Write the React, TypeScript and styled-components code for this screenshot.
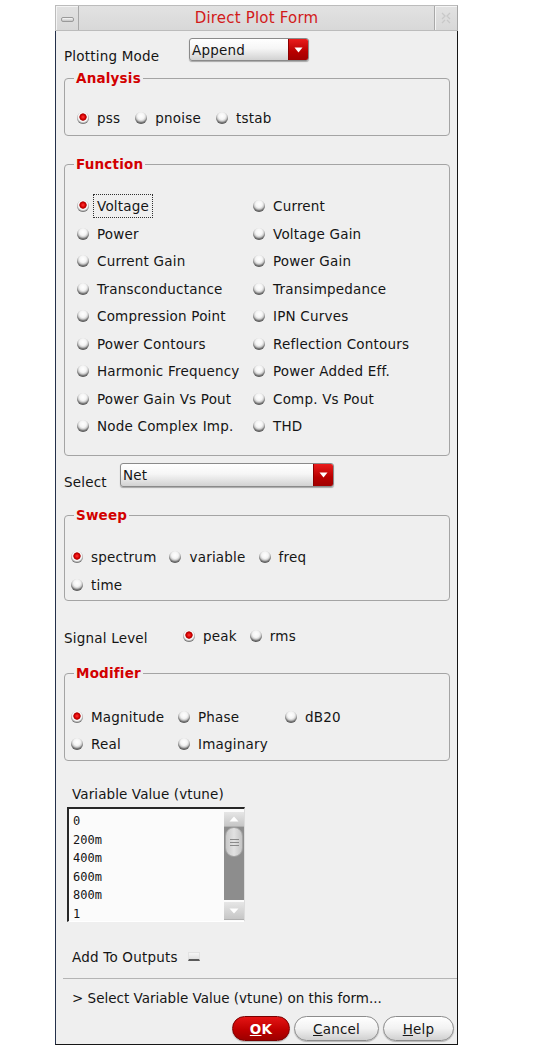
import React from "react";
import styled, { createGlobalStyle } from "styled-components";

const GlobalStyle = createGlobalStyle`
  html, body {
    margin: 0;
    padding: 0;
    background: #ffffff;
  }
  body {
    font-family: "DejaVu Sans", "Liberation Sans", sans-serif;
    font-size: 13.5px;
    letter-spacing: 0.2px;
    color: #151515;
  }
`;

const functionItems: [string, string][] = [
    ["Voltage", "Current"],
    ["Power", "Voltage Gain"],
    ["Current Gain", "Power Gain"],
    ["Transconductance", "Transimpedance"],
    ["Compression Point", "IPN Curves"],
    ["Power Contours", "Reflection Contours"],
    ["Harmonic Frequency", "Power Added Eff."],
    ["Power Gain Vs Pout", "Comp. Vs Pout"],
    ["Node Complex Imp.", "THD"],
];

const variableValues = ["0", "200m", "400m", "600m", "800m", "1"];

const Radio = ({ label, checked, focused }: { label: string; checked?: boolean; focused?: boolean }) => (
    <Item>
        <RadioDot $checked={ checked }/>
        <ItemLabel $focused={ focused }>{ label }</ItemLabel>
    </Item>
);

const Dropdown = ({ value, width, height }: { value: string; width: number; height: number }) => (
    <DropBox $width={ width } $height={ height }>
        <DropText>{ value }</DropText>
        <DropArrow>
            <svg width="9" height="6" viewBox="0 0 9 6">
                <polygon points="0.5,0.5 8.5,0.5 4.5,5.5" fill="#ffffff"/>
            </svg>
        </DropArrow>
    </DropBox>
);

const App = () => {
    return (
        <Page>
            <GlobalStyle/>
            <Window>
                <TitleBar>
                    <TitleButton $side="left">
                        <MinimizeGlyph/>
                    </TitleButton>
                    <TitleText>Direct Plot Form</TitleText>
                    <TitleButton $side="right">
                        <svg width="12" height="14" viewBox="0 0 12 14">
                            <path d="M2 2 L5 5 L2 8 M10 2 L7 5 L10 8 M2 12 L5 9 M10 12 L7 9"
                                  stroke="#c8c8c8" strokeWidth="1.3" fill="none"/>
                        </svg>
                    </TitleButton>
                </TitleBar>

                <Body>
                    <FormRow>
                        <FieldLabel $width={ 125 }>Plotting Mode</FieldLabel>
                        <Dropdown value="Append" width={ 120 } height={ 23 }/>
                    </FormRow>

                    <Group $mt={ 9 }>
                        <Legend>Analysis</Legend>
                        <GroupBody $pt={ 20 } $pb={ 5 } $pl={ 12 }>
                            <RadioRow $gap={ 11 }>
                                <Radio label="pss" checked/>
                                <Radio label="pnoise"/>
                                <Radio label="tstab"/>
                            </RadioRow>
                        </GroupBody>
                    </Group>

                    <Group $mt={ 20 }>
                        <Legend>Function</Legend>
                        <GroupBody $pt={ 22 } $pb={ 17 } $pl={ 12 }>
                            <FunctionGrid>
                                { functionItems.map(([a, b]) => (
                                    <React.Fragment key={ a }>
                                        <Radio label={ a } checked={ a === "Voltage" } focused={ a === "Voltage" }/>
                                        <Radio label={ b }/>
                                    </React.Fragment>
                                )) }
                            </FunctionGrid>
                        </GroupBody>
                    </Group>

                    <FormRow $mt={ 7 }>
                        <FieldLabel $width={ 56 }>Select</FieldLabel>
                        <Dropdown value="Net" width={ 214 } height={ 24 }/>
                    </FormRow>

                    <Group $mt={ 20 }>
                        <Legend>Sweep</Legend>
                        <GroupBody $pt={ 22 } $pb={ 3 } $pl={ 6 }>
                            <RadioRow $gap={ 9 }>
                                <Radio label="spectrum" checked/>
                                <Radio label="variable"/>
                                <Radio label="freq"/>
                            </RadioRow>
                            <RadioRow $gap={ 9 } $mt={ 4 }>
                                <Radio label="time"/>
                            </RadioRow>
                        </GroupBody>
                    </Group>

                    <SignalRow>
                        <SignalLabel>Signal Level</SignalLabel>
                        <RadioRow $gap={ 9 }>
                            <Radio label="peak" checked/>
                            <Radio label="rms"/>
                        </RadioRow>
                    </SignalRow>

                    <Group $mt={ 17 }>
                        <Legend>Modifier</Legend>
                        <GroupBody $pt={ 24 } $pb={ 4 } $pl={ 6 }>
                            <ModifierGrid>
                                <Radio label="Magnitude" checked/>
                                <Radio label="Phase"/>
                                <Radio label="dB20"/>
                                <Radio label="Real"/>
                                <Radio label="Imaginary"/>
                            </ModifierGrid>
                        </GroupBody>
                    </Group>

                    <PlainLabel $mt={ 25 }>Variable Value (vtune)</PlainLabel>
                    <ListBox>
                        <ListItems>
                            { variableValues.map(v => <ListItem key={ v }>{ v }</ListItem>) }
                        </ListItems>
                        <ScrollBar>
                            <ScrollArrow $height={ 14 }>
                                <svg width="10" height="6" viewBox="0 0 10 6">
                                    <polygon points="5,0.5 9.5,5.5 0.5,5.5" fill="#ffffff"/>
                                </svg>
                            </ScrollArrow>
                            <ScrollTrack>
                                <ScrollThumb>
                                    <GripLine/>
                                    <GripLine/>
                                    <GripLine/>
                                </ScrollThumb>
                            </ScrollTrack>
                            <ScrollArrow $height={ 17 }>
                                <svg width="10" height="6" viewBox="0 0 10 6">
                                    <polygon points="0.5,0.5 9.5,0.5 5,5.5" fill="#ffffff"/>
                                </svg>
                            </ScrollArrow>
                        </ScrollBar>
                    </ListBox>

                    <CheckRow>
                        <span>Add To Outputs</span>
                        <CheckBox/>
                    </CheckRow>

                    <Separator/>

                    <PlainLabel $mt={ 11 } $tight>&gt; Select Variable Value (vtune) on this form...</PlainLabel>

                    <ButtonRow>
                        <ActionButton $primary $width={ 58 }><u>O</u>K</ActionButton>
                        <ActionButton $width={ 85 }><u>C</u>ancel</ActionButton>
                        <ActionButton $width={ 71 }><u>H</u>elp</ActionButton>
                    </ButtonRow>
                </Body>
            </Window>
        </Page>
    );
};

export default App;

const Page = styled.div`
    padding: 5px 0 0 55px;
`;

const Window = styled.div`
    width: 403px;
    display: flex;
    flex-direction: column;
`;

const TitleBar = styled.div`
    height: 26px;
    box-sizing: border-box;
    display: flex;
    align-items: stretch;
    background: linear-gradient(#e2e2e2, #d8d8d8);
    border: 1px solid #bcbcbc;
    border-right-color: #a4a4a4;
`;

const TitleButton = styled.div<{ $side: "left" | "right" }>`
    width: 22px;
    display: flex;
    align-items: center;
    justify-content: center;
    box-shadow: inset 1px 1px 0 #f4f4f4;
    ${ p => p.$side === "left" ? "border-right: 1px solid #a8a8a8;" : "border-left: 1px solid #a8a8a8;" }
`;

const MinimizeGlyph = styled.span`
    width: 11px;
    height: 3px;
    border: 1px solid #9a9a9a;
    border-radius: 2px;
    background: linear-gradient(#f8f8f8, #c4c4c4);
    margin-top: 2px;
`;

const TitleText = styled.div`
    flex: 1;
    text-align: center;
    color: #d21a1a;
    font-size: 15px;
    line-height: 24px;
`;

const Body = styled.div`
    box-sizing: border-box;
    background: #efefef;
    border-left: 1px solid #24304a;
    border-right: 1px solid #161616;
    border-bottom: 1px solid #161616;
    padding: 7px 7px 3px 8px;
    display: flex;
    flex-direction: column;
`;

const FormRow = styled.div<{ $mt?: number }>`
    display: flex;
    align-items: flex-end;
    margin-top: ${ p => p.$mt ?? 0 }px;
`;

const FieldLabel = styled.span<{ $width: number }>`
    width: ${ p => p.$width }px;
    flex: none;
    line-height: 16px;
    margin-bottom: -3px;
`;

const DropBox = styled.div<{ $width: number; $height: number }>`
    width: ${ p => p.$width }px;
    height: ${ p => p.$height }px;
    box-sizing: border-box;
    display: flex;
    border: 1px solid #8a8a8a;
    border-radius: 3px;
    overflow: hidden;
    background: linear-gradient(#ffffff, #f6f6f6 45%, #d2d2d2);
    box-shadow: 0 1px 1px rgba(0, 0, 0, 0.3);
`;

const DropText = styled.span`
    flex: 1;
    padding-left: 2px;
    display: flex;
    align-items: center;
`;

const DropArrow = styled.span`
    width: 19px;
    display: flex;
    align-items: center;
    justify-content: center;
    background: linear-gradient(#ea1c1c, #b80000 60%, #a00000);
    border-left: 1px solid #8a0000;
`;

const Group = styled.fieldset<{ $mt: number }>`
    margin: ${ p => p.$mt }px 0 0;
    padding: 0;
    border: 1px solid #a4a4a4;
    border-radius: 4px;
    min-width: 0;
`;

const Legend = styled.legend`
    margin-left: 9px;
    padding: 0 2px;
    font-weight: bold;
    color: #d20000;
    line-height: 16px;
`;

const GroupBody = styled.div<{ $pt: number; $pb: number; $pl: number }>`
    padding: ${ p => p.$pt }px 0 ${ p => p.$pb }px ${ p => p.$pl }px;
`;

const RadioRow = styled.div<{ $gap: number; $mt?: number }>`
    display: flex;
    gap: ${ p => p.$gap }px;
    margin-top: ${ p => p.$mt ?? 0 }px;
`;

const FunctionGrid = styled.div`
    display: grid;
    grid-template-columns: 176px 1fr;
    grid-auto-rows: 24px;
    row-gap: 3.5px;
`;

const ModifierGrid = styled.div`
    display: grid;
    grid-template-columns: 107px 107px 1fr;
    grid-auto-rows: 24px;
    row-gap: 3px;
`;

const Item = styled.div`
    display: flex;
    align-items: center;
    height: 24px;
    gap: 4px;
    white-space: nowrap;
`;

const RadioDot = styled.span<{ $checked?: boolean }>`
    width: 12px;
    height: 12px;
    flex: none;
    border-radius: 50%;
    background: ${ p => p.$checked
        ? "radial-gradient(circle at 50% 42%, #ff3a3a 0, #d80000 2.3px, #a80000 3.3px, #ffffff 4px, #f0f0f0 4.8px, #acacac 5.8px, #505050 7px)"
        : "radial-gradient(circle at 50% 34%, #ffffff 0, #f4f4f4 3.4px, #cccccc 5px, #7c7c7c 6.4px, #484848 8px)" };
`;

const ItemLabel = styled.span<{ $focused?: boolean }>`
    height: 24px;
    box-sizing: border-box;
    display: flex;
    align-items: center;
    padding: 0 3px;
    border: 1px dotted ${ p => p.$focused ? "#303030" : "transparent" };
`;

const SignalRow = styled.div`
    display: flex;
    align-items: center;
    margin-top: 23px;
`;

const SignalLabel = styled.span`
    width: 119px;
    flex: none;
    padding-top: 3px;
`;

const PlainLabel = styled.div<{ $mt: number; $tight?: boolean }>`
    margin: ${ p => p.$mt }px 0 0 8px;
    line-height: 16px;
    white-space: nowrap;
    letter-spacing: ${ p => p.$tight ? "0" : "0.1px" };
`;

const ListBox = styled.div`
    margin: 5px 0 0 3px;
    width: 178px;
    height: 115px;
    box-sizing: border-box;
    display: flex;
    background: #fbfbfb;
    border-top: 2px solid #262626;
    border-left: 2px solid #262626;
    border-right: 1px solid #dcdcdc;
    border-bottom: 1px solid #ffffff;
`;

const ListItems = styled.div`
    flex: 1;
    overflow: hidden;
    padding: 3px 0 0 4px;
    font-family: "DejaVu Sans Mono", "Liberation Mono", monospace;
    font-size: 12px;
    letter-spacing: 0;
    line-height: 18.6px;
`;

const ListItem = styled.div`
    white-space: nowrap;
`;

const ScrollBar = styled.div`
    width: 20px;
    display: flex;
    flex-direction: column;
    padding: 3px 0 1px;
`;

const ScrollArrow = styled.div<{ $height: number }>`
    height: ${ p => p.$height }px;
    display: flex;
    align-items: center;
    justify-content: center;
    background: linear-gradient(#e6e6e6, #c6c6c6);
    border-bottom: 1px solid #b0b0b0;
`;

const ScrollTrack = styled.div`
    flex: 1;
    background: #8d8d8d;
    margin-bottom: 2px;
`;

const ScrollThumb = styled.div`
    height: 30px;
    box-sizing: border-box;
    margin: 0 1px;
    border: 1px solid #a4a4a4;
    border-radius: 9px;
    background: linear-gradient(90deg, #c8c8c8, #e2e2e2 50%, #c4c4c4);
    display: flex;
    flex-direction: column;
    align-items: center;
    justify-content: center;
    gap: 2px;
`;

const GripLine = styled.span`
    width: 9px;
    height: 1px;
    background: #8a8a8a;
`;

const CheckRow = styled.div`
    display: flex;
    align-items: center;
    gap: 10px;
    margin: 27px 0 0 8px;
    line-height: 16px;
`;

const CheckBox = styled.span`
    width: 12px;
    height: 9px;
    box-sizing: border-box;
    background: linear-gradient(#f6f6f6, #e0e0e0);
    border: 1px solid #e2e2e2;
    border-bottom: 2px solid #5a5a5a;
    margin-top: -2px;
`;

const Separator = styled.div`
    height: 1px;
    background: #b4b4b4;
    margin: 13px -7px 0 -1px;
`;

const ButtonRow = styled.div`
    display: flex;
    justify-content: flex-end;
    gap: 4px;
    margin: 10px -4px 0 0;
`;

const ActionButton = styled.button<{ $primary?: boolean; $width: number }>`
    width: ${ p => p.$width }px;
    height: 25px;
    padding: 0;
    border-radius: 13px;
    font-family: "DejaVu Sans", "Liberation Sans", sans-serif;
    font-size: 13.5px;
    letter-spacing: 0.2px;
    font-weight: ${ p => p.$primary ? "bold" : "normal" };
    color: ${ p => p.$primary ? "#ffffff" : "#161616" };
    border: 1px solid ${ p => p.$primary ? "#7a0000" : "#8c8c8c" };
    background: ${ p => p.$primary
        ? "linear-gradient(#e41414, #c00000 55%, #9c0000)"
        : "linear-gradient(#ffffff, #f2f2f2 50%, #d0d0d0)" };
    box-shadow: 0 1px 1px rgba(0, 0, 0, 0.25);
`;
